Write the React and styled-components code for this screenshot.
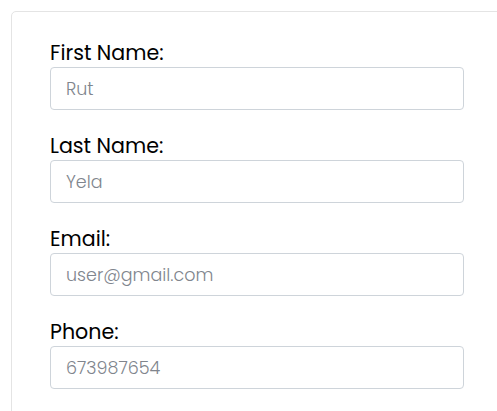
import React from "react";
import styled, { createGlobalStyle } from "styled-components";

const GlobalStyle = createGlobalStyle`
  html, body {
    margin: 0;
    padding: 0;
    background: #fff;
    overflow: hidden;
  }
  body {
    font-family: "Poppins", "Inter", "Noto Sans", sans-serif;
  }
`;

const Card = styled.div`
  box-sizing: border-box;
  margin: 11px 0 0 11px;
  width: 492px;
  min-height: 420px;
  padding: 28px 38px 0 38px;
  border: 1px solid #e4e4e4;
  border-radius: 5px;
  background: #fff;
`;

const Field = styled.div`
  display: flex;
  flex-direction: column;
  margin-bottom: 23px;
`;

const Label = styled.label`
  font-size: 20.6px;
  line-height: 25px;
  margin-bottom: 2px;
  font-weight: 400;
  color: #000;
`;

const Input = styled.input`
  box-sizing: border-box;
  width: 100%;
  height: 43px;
  padding: 0 15px;
  border: 1px solid #ced4da;
  border-radius: 4px;
  font-family: inherit;
  font-size: 17.5px;
  font-weight: 300;
  color: #333;
  outline: none;
  &::placeholder {
    color: #80858d;
  }
`;

const fields = [
  { id: "first", label: "First Name:", placeholder: "Rut" },
  { id: "last", label: "Last Name:", placeholder: "Yela" },
  { id: "email", label: "Email:", placeholder: "user@gmail.com" },
  { id: "phone", label: "Phone:", placeholder: "673987654" },
];

const App = () => {
  return (
    <>
      <GlobalStyle />
      <Card>
        {fields.map((f) => (
          <Field key={f.id}>
            <Label htmlFor={f.id}>{f.label}</Label>
            <Input id={f.id} placeholder={f.placeholder} />
          </Field>
        ))}
      </Card>
    </>
  );
};

export default App;
